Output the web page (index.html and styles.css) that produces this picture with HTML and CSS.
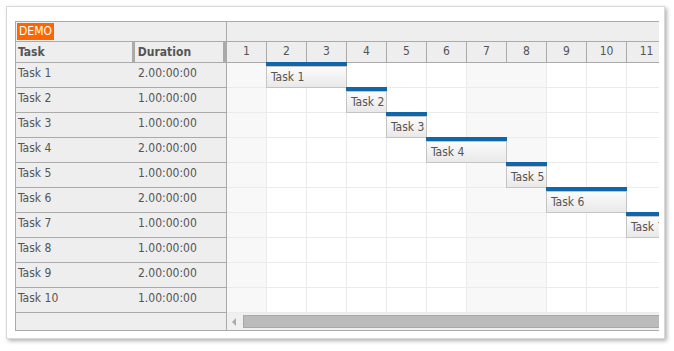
FILE: index.html
```html
<!DOCTYPE html>
<html>
<head>
<meta charset="UTF-8">
<title>Gantt</title>
<link rel="stylesheet" href="styles.css">
</head>
<body>
	<div id="main">
		<div class="gantt">
			<div class="rows">
				<div class="corner"><span class="demo">DEMO</span></div>
				<div class="colhead">
					<div class="cname">Task</div>
					<div class="cdur">Duration</div>
				</div>
				<div class="row"><div class="cname">Task 1</div><div class="cdur">2.00:00:00</div></div>
				<div class="row"><div class="cname">Task 2</div><div class="cdur">1.00:00:00</div></div>
				<div class="row"><div class="cname">Task 3</div><div class="cdur">1.00:00:00</div></div>
				<div class="row"><div class="cname">Task 4</div><div class="cdur">2.00:00:00</div></div>
				<div class="row"><div class="cname">Task 5</div><div class="cdur">1.00:00:00</div></div>
				<div class="row"><div class="cname">Task 6</div><div class="cdur">2.00:00:00</div></div>
				<div class="row"><div class="cname">Task 7</div><div class="cdur">1.00:00:00</div></div>
				<div class="row"><div class="cname">Task 8</div><div class="cdur">1.00:00:00</div></div>
				<div class="row"><div class="cname">Task 9</div><div class="cdur">2.00:00:00</div></div>
				<div class="row"><div class="cname">Task 10</div><div class="cdur">1.00:00:00</div></div>
				<div class="filler"></div>
			</div>

			<div class="chart">
				<div class="timehead"></div>
				<div class="days">
					<div class="day">1</div><div class="day">2</div><div class="day">3</div><div class="day">4</div>
					<div class="day">5</div><div class="day">6</div><div class="day">7</div><div class="day">8</div>
					<div class="day">9</div><div class="day">10</div><div class="day">11</div><div class="day">12</div>
				</div>
				<div class="grid">
					<div class="gridrow"><div class="bar" style="left:39px;width:81px"><div class="box">Task 1</div></div></div>
					<div class="gridrow"><div class="bar" style="left:119px;width:41px"><div class="box">Task 2</div></div></div>
					<div class="gridrow"><div class="bar" style="left:159px;width:41px"><div class="box">Task 3</div></div></div>
					<div class="gridrow"><div class="bar" style="left:199px;width:81px"><div class="box">Task 4</div></div></div>
					<div class="gridrow"><div class="bar" style="left:279px;width:41px"><div class="box">Task 5</div></div></div>
					<div class="gridrow"><div class="bar" style="left:319px;width:81px"><div class="box">Task 6</div></div></div>
					<div class="gridrow"><div class="bar" style="left:399px;width:41px"><div class="box">Task 7</div></div></div>
					<div class="gridrow"></div>
					<div class="gridrow"></div>
					<div class="gridrow"></div>
				</div>
				<div class="scroll">
					<span class="arrow"></span>
					<div class="thumb"></div>
				</div>
			</div>
		</div>
	</div>
</body>
</html>
```

FILE: styles.css
```css
body {
	margin: 0;
	background-color: #FFFFFF;
	font-family: "DejaVu Sans Condensed", "DejaVu Sans", sans-serif;
	font-stretch: condensed;
	font-size: 12px;
	color: #555555;
}

#main {
	margin: 6px;
	width: 645px;
	height: 311px;
	padding: 14px 4px 6px 8px;
	background-color: #FFFFFF;
	border: 1px solid #D8D8D8;
	box-shadow: 2px 2px 4px rgba(0, 0, 0, 0.3);
}

.gantt {
	display: flex;
	width: 643px;
	border-top: 1px solid #AAAAAA;
	border-left: 1px solid #AAAAAA;
	border-bottom: 1px solid #AAAAAA;
	overflow: hidden;
}

/* left side: task list */
.rows {
	flex: none;
	width: 210px;
	border-right: 1px solid #AAAAAA;
	background-color: #EEEEEE;
}

.corner {
	height: 18px;
	border-bottom: 1px solid #AAAAAA;
	padding-left: 1px;
	padding-top: 1px;
}

.demo {
	display: inline-block;
	height: 17px;
	line-height: 17px;
	padding: 0 2px;
	background-color: #FF6600;
	color: #FFFFFF;
}

.colhead {
	display: flex;
	height: 20px;
	line-height: 20px;
	border-bottom: 1px solid #AAAAAA;
	font-weight: bold;
}

.colhead .cname {
	width: 115px;
	border-right: 3px solid #AAAAAA;
}

.colhead .cdur {
	width: 86px;
	padding-left: 3px;
	border-right: 3px solid #AAAAAA;
}

.row {
	display: flex;
	height: 24px;
	line-height: 21px;
	border-bottom: 1px solid #AAAAAA;
}

.cname {
	width: 118px;
	padding-left: 2px;
}

.cdur {
	width: 88px;
	padding-left: 2px;
}

.filler {
	height: 17px;
}

/* right side: timeline */
.chart {
	flex: 1;
	overflow: hidden;
	background-color: #FFFFFF;
}

.timehead {
	height: 19px;
	border-bottom: 1px solid #AAAAAA;
	background-color: #EEEEEE;
}

.days {
	display: flex;
	width: 480px;
	height: 20px;
	line-height: 19px;
	border-bottom: 1px solid #AAAAAA;
	background-color: #EEEEEE;
}

.day {
	flex: none;
	width: 39px;
	border-right: 1px solid #AAAAAA;
	text-align: center;
}

.gridrow {
	position: relative;
	width: 480px;
	height: 24px;
	border-bottom: 1px solid #EBEBEB;
	background-image:
		linear-gradient(to right, #F8F8F8 0, #F8F8F8 39px, transparent 39px, transparent 240px, #F8F8F8 240px, #F8F8F8 319px, transparent 319px),
		repeating-linear-gradient(to right, transparent 0, transparent 39px, #EBEBEB 39px, #EBEBEB 40px);
}

.bar {
	position: absolute;
	top: -1px;
	height: 22px;
	border-top: 4px solid #1066A8;
}

.box {
	height: 20px;
	line-height: 20px;
	padding-left: 4px;
	border: 1px solid #C4C4C4;
	background: linear-gradient(#FBFBFB, #E9E9E9);
	white-space: nowrap;
	overflow: hidden;
}

.scroll {
	display: flex;
	align-items: center;
	height: 17px;
	background-color: #F0F0F0;
}

.arrow {
	width: 0;
	height: 0;
	margin: 0 7px 0 5px;
	border-top: 4px solid transparent;
	border-bottom: 4px solid transparent;
	border-right: 4px solid #AAAAAA;
}

.thumb {
	flex: 1;
	height: 11px;
	border: 1px solid #A8A8A8;
	border-right: none;
	background-color: #BBBBBB;
}
```
